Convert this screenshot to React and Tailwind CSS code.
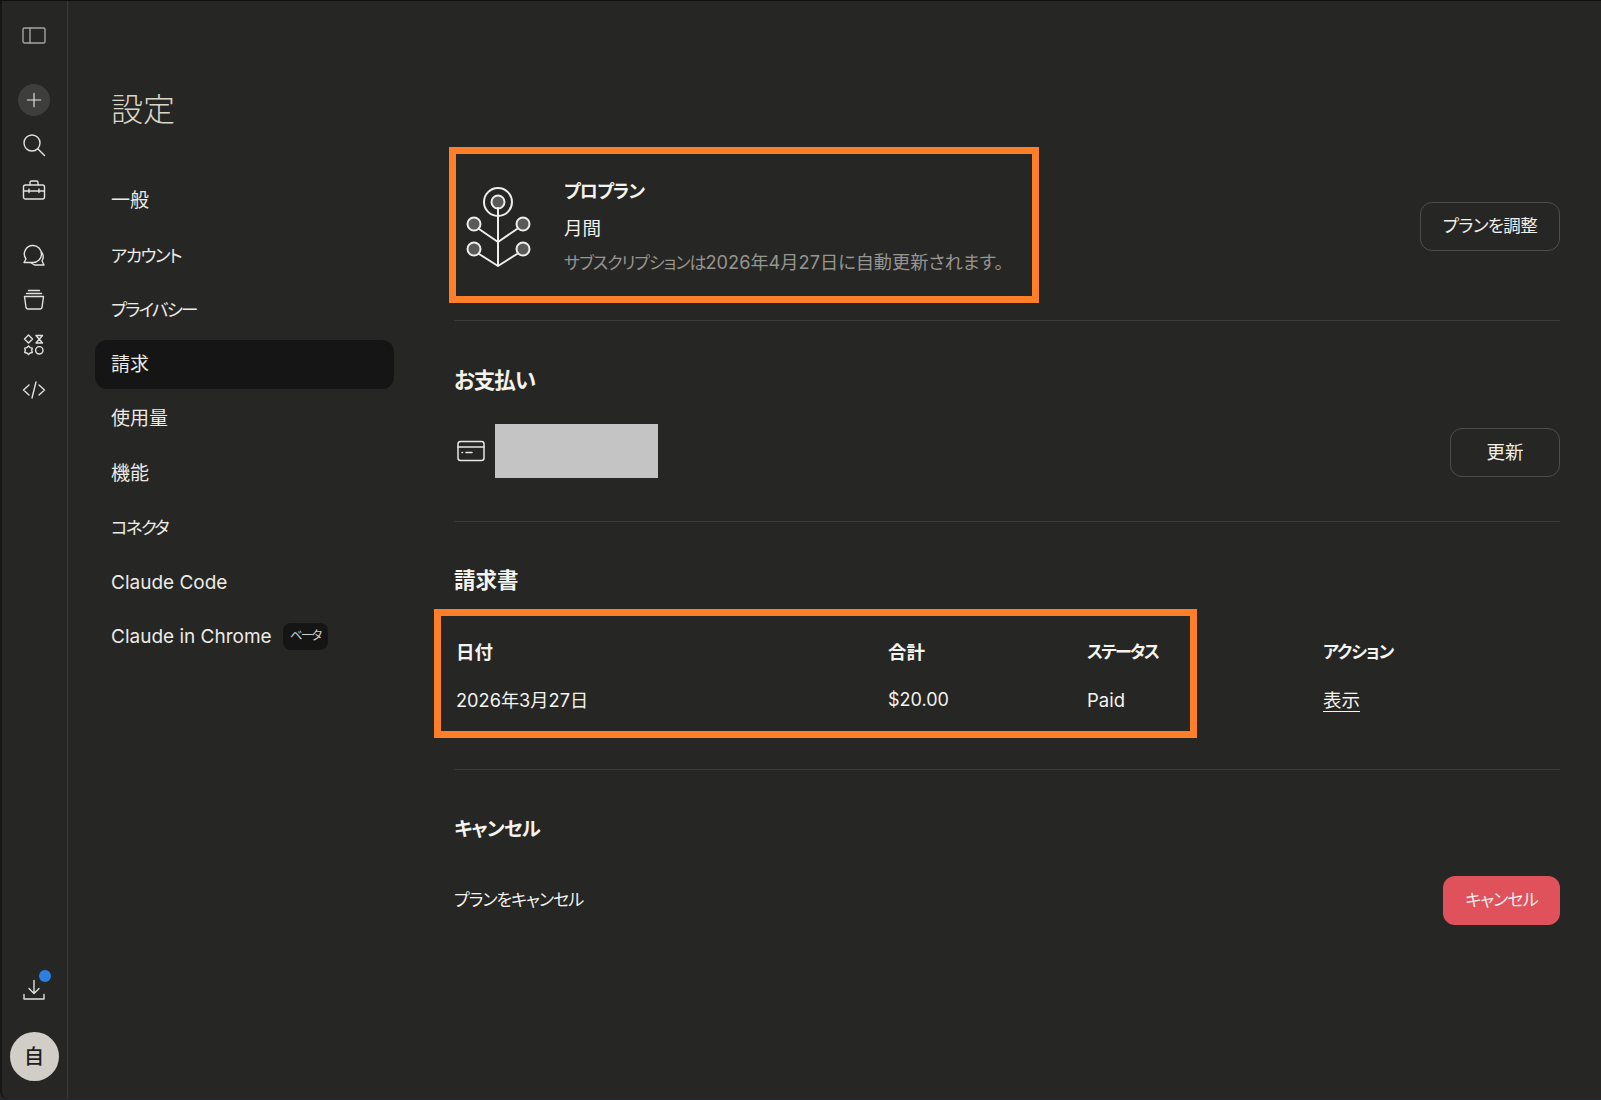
const NAV = [
  { label: '一般' },
  { label: 'アカウント', kana: 'text-[17.500px] tracking-[-1.400px]' },
  { label: 'プライバシー', kana: 'text-[17.500px] tracking-[-1.800px]' },
  { label: '請求' },
  { label: '使用量' },
  { label: '機能' },
  { label: 'コネクタ', kana: 'text-[17.500px] tracking-[-1.700px]' },
  { label: 'Claude Code' },
  { label: 'Claude in Chrome' },
]

function Icon({ children, size = 24, box = 24 }) {
  return (
    <svg width={size} height={size} viewBox={`0 0 ${box} ${box}`} fill="none" stroke="currentColor" strokeWidth="1.4" strokeLinecap="round" strokeLinejoin="round">
      {children}
    </svg>
  )
}

function Rail() {
  return (
    <aside className="w-[68px] shrink-0 rounded-bl-[8px] border-r border-r-[#3a3a38] border-l-2 border-l-[#161616] flex flex-col items-center text-[#e2e1db] pt-[22px] pb-[18px] pr-[1px]">
      <div className="h-[24px] flex items-center justify-center text-[#a5a49e]">
        <Icon><rect x="1" y="5" width="22" height="15" rx="1.5" /><path d="M8 5v15" /></Icon>
      </div>
      <div className="mt-[37px] w-[32px] h-[32px] rounded-full bg-[#3e3e3c] flex items-center justify-center">
        <Icon size={20}><path d="M12 4v16M4 12h16" /></Icon>
      </div>
      <div className="mt-[17px]">
        <Icon><circle cx="10" cy="10" r="8" /><path d="M16 16 22.500 22.500" /></Icon>
      </div>
      <div className="mt-[21px]">
        <Icon><rect x="1.500" y="7" width="21" height="14" rx="2" /><path d="M8 7V4.500A1.500 1.500 0 0 1 9.500 3h5A1.500 1.500 0 0 1 16 4.500V7M1.500 13h21M7 11v3.500M17 11v3.500" /></Icon>
      </div>
      <div className="mt-[41px]">
        <Icon><path d="M11 2.500a8.500 8.500 0 0 1 8.500 8.500c0 4.700-3.800 8.500-8.500 8.500H2l2-3.500A8.500 8.500 0 0 1 11 2.500Z" /><path d="M19.500 9c2 3 2 6.500.5 9l2 4H12.500L8.500 19.500" /></Icon>
      </div>
      <div className="mt-[21px]">
        <Icon><path d="M6.500 2.500h11M4.500 5.500h15" /><path d="M2.500 8.500h19l-1.500 11a2 2 0 0 1-2 1.500H6a2 2 0 0 1-2-1.500Z" /></Icon>
      </div>
      <div className="mt-[21px]">
        <Icon><path d="m6.500 2 4 4-4 4-4-4Z" /><path d="M14 2.500h6.500L17.300 6.200l3.200 3.800H14l3.300-3.800Z" /><path d="m6.500 13 1.600 1.600 2.200.5-.6 2.200.6 2.200-2.200.5-1.600 1.600-1.600-1.600-2.200-.5.600-2.200-.6-2.200 2.200-.5Z" /><circle cx="17.300" cy="17.300" r="3.700" /></Icon>
      </div>
      <div className="mt-[21px]">
        <Icon><path d="M7 7 1.500 12 7 17M17 7l5.500 5-5.500 5M14 4l-4 16" /></Icon>
      </div>
      <div className="mt-auto relative">
        <Icon><path d="M12 3.500v13M7 11.500l5 5 5-5M2 17.500v4.500h20v-4.500" /></Icon>
        <span className="absolute -top-[7px] -right-[5px] w-[12px] h-[12px] rounded-full bg-[#2b7fe0]" />
      </div>
      <div className="mt-[31px] w-[49px] h-[49px] rounded-full bg-[#d0cec6] flex items-center justify-center text-[#1e1e1c] text-[20px] font-medium">
        自
      </div>
    </aside>
  )
}

function OutlineButton({ children, className }) {
  return (
    <button className={`h-[49px] shrink-0 rounded-[12px] border border-[#4e4e4c] text-[#f1f0ea] ${className}`}>
      {children}
    </button>
  )
}

function PlanIcon() {
  return (
    <svg width="66" height="82" viewBox="0 0 66 82" fill="none" stroke="#efeee8" strokeWidth="2" strokeLinecap="round" strokeLinejoin="round" className="shrink-0 mt-[6px]">
      <circle cx="32" cy="15" r="14" />
      <circle cx="32" cy="15" r="6.500" fill="#5a5a58" />
      <path d="M32 21v58M13 42l19 13 19-13M13 67l19 12 19-12" />
      <circle cx="8" cy="37" r="6.500" fill="#5a5a58" />
      <circle cx="57" cy="37" r="6.500" fill="#5a5a58" />
      <circle cx="8" cy="62" r="6.500" fill="#5a5a58" />
      <circle cx="57" cy="62" r="6.500" fill="#5a5a58" />
    </svg>
  )
}

function Annotation({ className }) {
  return <div className={`absolute border-[7px] border-[#fd7f2a] pointer-events-none ${className}`} />
}

export default function App() {
  return (
    <div className="w-[1601px] h-[1100px] overflow-hidden flex bg-[#262625] border-t border-t-[#0f0f0f] border-b border-b-[#1c2a40] text-[#f4f3ed] text-[18.500px] [font-feature-settings:'palt'] font-['Inter','Noto_Sans_CJK_JP',sans-serif]">
      <Rail />

      <main className="flex-1 flex pl-[27px] pr-[41px]">
        {/* Settings nav */}
        <div className="w-[299px] shrink-0">
          <h1 className="mt-[87px] pl-[16px] text-[32px] leading-[44px] font-light text-[#d9d6c8]">設定</h1>
          <nav className="mt-[44px] flex flex-col gap-[5.500px] text-[19px]">
            {NAV.map(item => (
              <div
                key={item.label}
                className={`h-[49px] pl-[16px] pt-[2px] rounded-[12px] flex items-center gap-[11px] text-[#ecebe5] ${item.label === '請求' ? 'bg-[#151515]' : ''}`}
              >
                <span className={item.kana}>{item.label}</span>
                {item.label === 'Claude in Chrome' && (
                  <span className="-mt-[2px] h-[27px] w-[45px] justify-center rounded-[8px] bg-[#151515] text-[#cfcec8] text-[12.500px] tracking-[-1.800px] flex items-center">ベータ</span>
                )}
              </div>
            ))}
          </nav>
        </div>

        {/* Billing */}
        <div className="flex-1 ml-[60px] pt-[146px]">
          <section className="relative h-[174px] border-b border-[#3c3c3a] flex justify-between pt-[34px]">
            <Annotation className="-left-[5px] top-0 w-[590px] h-[156px]" />
            <div className="flex gap-[32px] pl-[12px]">
              <PlanIcon />
              <div className="-mt-[2px]">
                <div className="font-semibold leading-[26px] text-[18px] tracking-[-0.900px]">プロプラン</div>
                <div className="mt-[10px] leading-[26px]">月間</div>
                <div className="mt-[8px] leading-[26px] text-[#96958f] text-[18.200px]">
                  <span className="text-[17px] tracking-[-1px]">サブスクリプションは</span>2026年4月27日に自動更新されます。
                </div>
              </div>
            </div>
            <div className="pt-[21px]">
              <OutlineButton className="w-[140px] text-[17.500px] tracking-[-0.600px]">プランを調整</OutlineButton>
            </div>
          </section>

          <section className="h-[201px] border-b border-[#3c3c3a] pt-[45px]">
            <h2 className="text-[21.500px] leading-[28px] font-semibold tracking-[-1px]">お支払い</h2>
            <div className="mt-[30px] flex items-center justify-between">
              <div className="flex items-center gap-[9px] pl-[2px]">
                <svg width="30" height="22" viewBox="0 0 30 22" fill="none" stroke="#e8e7e1" strokeWidth="1.500" strokeLinecap="round">
                  <rect x="2" y="1.500" width="26" height="19" rx="2.500" />
                  <path d="M2 7h26M6 12.500h.5M10 12.500h6" />
                </svg>
                <div className="w-[163px] h-[54px] bg-[#c4c4c4]" />
              </div>
              <OutlineButton className="w-[110px] mt-[3px]">更新</OutlineButton>
            </div>
          </section>

          <section className="relative h-[248px] border-b border-[#3c3c3a] pt-[44px]">
            <Annotation className="-left-[20px] top-[87px] w-[763px] h-[129px]" />
            <h2 className="text-[21.500px] leading-[28px] font-semibold">請求書</h2>
            <div className="mt-[45px] pl-[2px] grid grid-cols-[432px_199px_236px_1fr] gap-y-[22px] leading-[26px]">
              <div className="font-semibold">日付</div>
              <div className="font-semibold">合計</div>
              <div className="font-semibold text-[17px] tracking-[-1.700px]">ステータス</div>
              <div className="font-semibold text-[17px] tracking-[-1px]">アクション</div>
              <div className="text-[18.200px]">2026年3月27日</div>
              <div className="text-[18px]">$20.00</div>
              <div>Paid</div>
              <div><span className="underline underline-offset-4">表示</span></div>
            </div>
          </section>

          <section className="pt-[45px]">
            <h2 className="text-[19.500px] leading-[28px] font-semibold tracking-[-0.800px]">キャンセル</h2>
            <div className="mt-[33px] flex items-center justify-between">
              <div className="text-[17px] tracking-[-1px]">プランをキャンセル</div>
              <button className="h-[49px] w-[117px] rounded-[12px] bg-[#e0525b] text-[#f7eeee] text-[17px] tracking-[-0.900px]">キャンセル</button>
            </div>
          </section>
        </div>
      </main>
    </div>
  )
}
